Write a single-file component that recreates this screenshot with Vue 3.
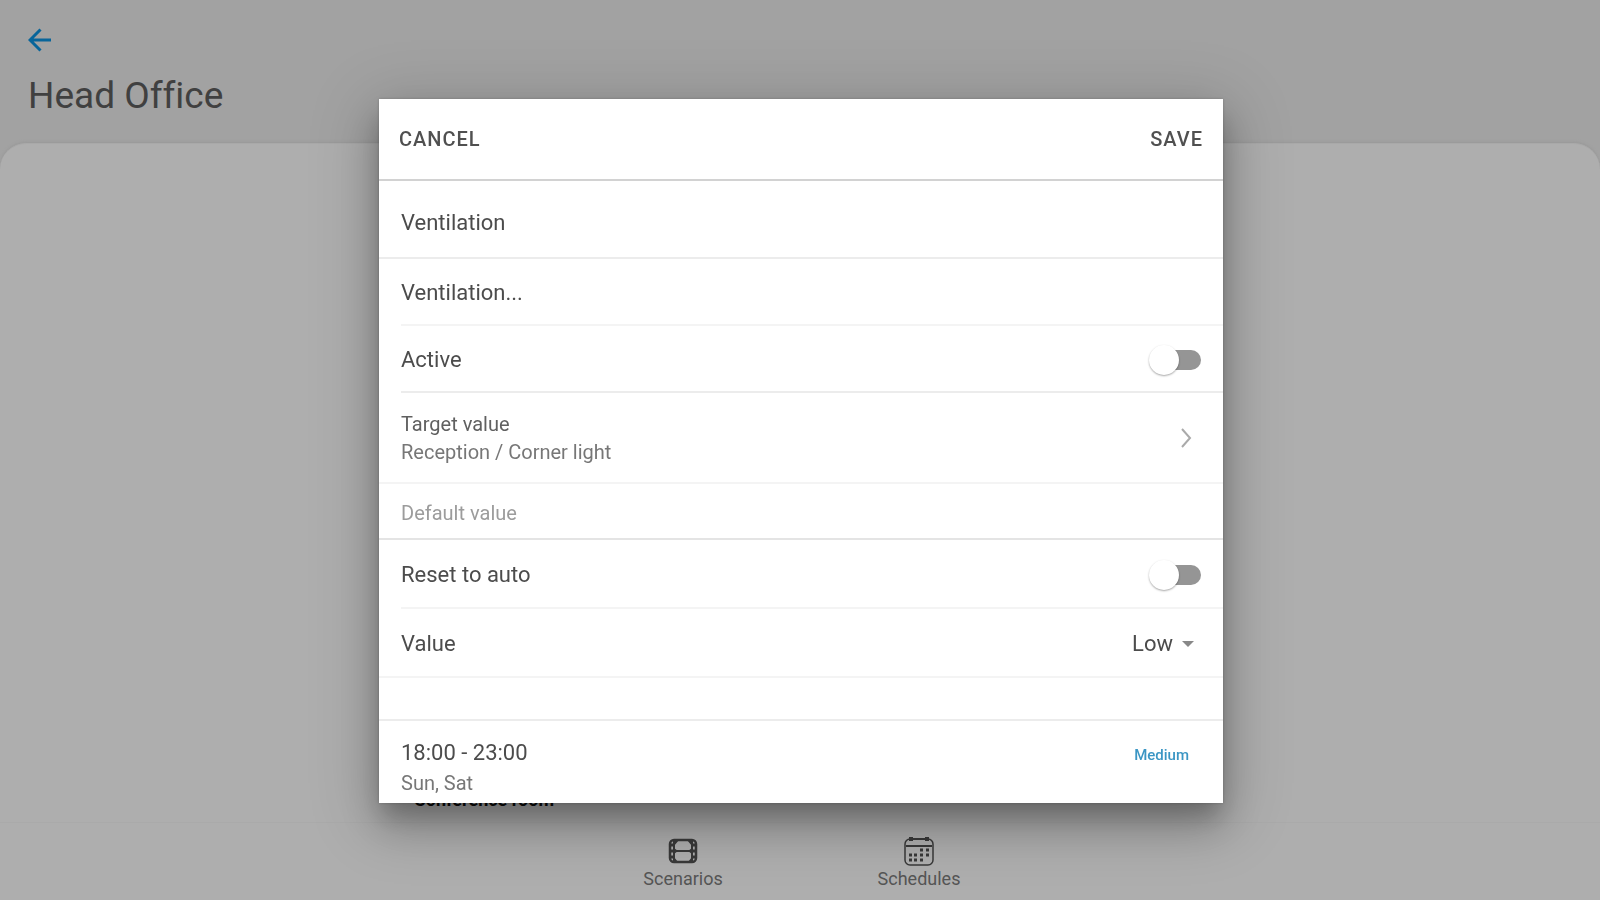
<script setup>
import { ref } from 'vue'

const active = ref(false)
const resetToAuto = ref(false)
const value = ref('Low')
</script>

<template>
  <div class="app">
    <header class="top">
      <a class="back" href="#" aria-label="Back">
        <svg viewBox="0 0 24 24" width="24" height="24" fill="none" stroke="currentColor" stroke-width="3">
          <path d="M23 12H3M12.500 1.500 2 12 12.500 22.500" />
        </svg>
      </a>
      <h1>Head Office</h1>
    </header>

    <main class="panel">
      <p class="room">Conference room</p>
    </main>

    <nav class="tabs">
      <a href="#" class="tab">
        <svg viewBox="0 0 32 32" width="32" height="32">
          <rect x="3" y="5" width="26" height="22" rx="4" fill="none" stroke="currentColor" stroke-width="2.500" />
          <path d="M7 5v22M25 5v22M7 16h18" fill="none" stroke="currentColor" stroke-width="2" />
          <path d="M3 10h4M3 16h4M3 22h4M25 10h4M25 16h4M25 22h4" stroke="currentColor" stroke-width="3" />
          <path d="M7 5h5l-5 6zM25 5h-5l5 6zM7 27h4l-4-5zM25 27h-4l4-5zM7 13l4 3-4 3zM25 13l-4 3 4 3z" fill="currentColor" />
        </svg>
        <span>Scenarios</span>
      </a>
      <a href="#" class="tab">
        <svg viewBox="0 0 32 32" width="32" height="32" fill="none" stroke="currentColor">
          <rect x="2" y="4" width="28" height="26" rx="5" stroke-width="1.500" />
          <path d="M3 11h26" stroke-width="2" />
          <path d="M8 2v4M24 2v4" stroke-width="4" />
          <path d="M8 4h16" stroke-width="2" />
          <path d="M17 15h3M23 15h3M6 20h3M11 20h3M17 20h3M23 20h3M6 25h3M11 25h3M17 25h3" stroke-width="3" />
        </svg>
        <span>Schedules</span>
      </a>
    </nav>

    <div class="overlay">
      <form class="dialog" role="dialog" aria-label="Edit schedule" @submit.prevent>
        <div class="actions">
          <button type="button">CANCEL</button>
          <button type="submit">SAVE</button>
        </div>
        <div class="row name">Ventilation</div>
        <div class="inset"><div class="row faint">Ventilation...</div></div>
        <div class="inset">
          <label class="row">
            <span>Active</span>
            <input v-model="active" class="switch" type="checkbox" role="switch" />
          </label>
        </div>
        <button type="button" class="row target">
          <span class="stack">
            <span class="target-label">Target value</span>
            <span class="sub">Reception / Corner light</span>
          </span>
          <svg class="chevron" viewBox="0 0 12 20" width="12" height="20" fill="none" stroke="currentColor" stroke-width="2">
            <path d="M1 1l8 9-8 9" />
          </svg>
        </button>
        <div class="row section">Default value</div>
        <div class="inset">
          <label class="row auto faint">
            <span>Reset to auto</span>
            <input v-model="resetToAuto" class="switch" type="checkbox" role="switch" />
          </label>
        </div>
        <div class="row auto faint">
          <label for="value">Value</label>
          <span class="picker">
            <select id="value" v-model="value">
              <option>Low</option>
              <option>Medium</option>
              <option>High</option>
            </select>
            <svg viewBox="0 0 12 6" width="12" height="6"><path d="M0 0h12L6 6z" fill="currentColor" /></svg>
          </span>
        </div>
        <div class="spacer"></div>
        <div class="row slot">
          <span class="stack">
            <span>18:00 - 23:00</span>
            <span class="sub days">Sun, Sat</span>
          </span>
          <span class="level">Medium</span>
        </div>
      </form>
    </div>
  </div>
</template>

<style>
body {
  background: #a2a2a2;
}
</style>

<style scoped>
* {
  box-sizing: border-box;
}
.app {
  display: flex;
  flex-direction: column;
  min-height: 100vh;
  background: #a2a2a2;
  font-family: Roboto, "Liberation Sans", sans-serif;
}
.top {
  padding: 28px 28px 0;
  height: 143px;
}
.back {
  display: block;
  width: 24px;
  height: 24px;
  color: #08659a;
}
h1 {
  margin: 23px 0 0;
  font-size: 37px;
  line-height: 42px;
  font-weight: 400;
  font-variant-ligatures: none;
  color: #404040;
}
.panel {
  flex: 1;
  display: flex;
  align-items: flex-end;
  padding: 0 414px 10px;
  background: #aeaeae;
  border-top: 1px solid #a9a9a9;
  border-radius: 26px 26px 0 0;
  box-shadow: 0 -1px 3px #989898;
}
.room {
  margin: 0;
  font-size: 18px;
  line-height: 24px;
  font-weight: 700;
  color: #0c0c0c;
}
.tabs {
  display: flex;
  justify-content: center;
  gap: 136px;
  height: 78px;
  padding: 12px 0 0 2px;
  background: #aeaeae;
  border-top: 1px solid #aaaaaa;
}
.tab {
  display: flex;
  flex-direction: column;
  align-items: center;
  width: 100px;
  color: #393939;
  text-decoration: none;
}
.tab span {
  font-size: 18px;
  line-height: 24px;
  color: #555555;
}
.overlay {
  position: fixed;
  inset: 0;
  display: flex;
  align-items: center;
  justify-content: center;
  padding: 2px 0 0 2px;
}
.dialog {
  width: 100%;
  max-width: 844px;
  background: #ffffff;
  color: #4c4c4c;
  font-size: 22px;
  line-height: 28px;
  box-shadow: 0 16px 22px -4px rgba(0, 0, 0, 0.2), 0 24px 40px 3px rgba(0, 0, 0, 0.17), 0 12px 60px 10px rgba(0, 0, 0, 0.16), 0 0 3px rgba(0, 0, 0, 0.2);
}
button {
  margin: 0;
  padding: 0;
  border: 0;
  background: none;
  font-family: inherit;
  color: inherit;
}
.actions {
  display: flex;
  justify-content: space-between;
  align-items: center;
  height: 82px;
  padding: 0 20px;
  border-bottom: 2px solid #d2d2d2;
}
.actions button {
  font-size: 20px;
  line-height: 24px;
  font-weight: 500;
  letter-spacing: 1px;
  color: #505050;
}
.row {
  display: flex;
  align-items: center;
  justify-content: space-between;
  height: 67px;
  padding: 2px 22px 0;
  border-bottom: 2px solid #ececec;
}
.inset {
  padding-left: 22px;
}
.inset .row {
  padding-left: 0;
}
.row.name {
  height: 78px;
  padding-top: 8px;
}
.row.faint {
  border-bottom-color: #f4f4f4;
}
.row.auto {
  height: 69px;
}
.stack {
  display: flex;
  flex-direction: column;
  text-align: left;
}
.row.target {
  width: 100%;
  height: 91px;
  padding: 0 30px 0 22px;
  border-bottom: 2px solid #f4f4f4;
  font-size: 20px;
  line-height: 28px;
}
.target-label {
  color: #606060;
}
.sub {
  font-size: 20px;
  line-height: 28px;
  color: #777777;
}
.chevron {
  color: #aaaaaa;
}
.row.section {
  height: 56px;
  padding-top: 4px;
  font-size: 20px;
  color: #9c9c9c;
  border-bottom-color: #e4e4e4;
}
.switch {
  appearance: none;
  position: relative;
  width: 52px;
  height: 32px;
  margin: 0;
}
.switch::before {
  content: "";
  position: absolute;
  top: 6px;
  right: 0;
  width: 44px;
  height: 20px;
  border-radius: 10px;
  background: #959595;
}
.switch::after {
  content: "";
  position: absolute;
  top: 1px;
  left: 0;
  width: 30px;
  height: 30px;
  border-radius: 50%;
  background: #ffffff;
  box-shadow: 0 1px 2px rgba(0, 0, 0, 0.35);
}
.switch:checked::after {
  left: 22px;
}
.picker {
  display: flex;
  align-items: center;
  gap: 9px;
  padding-right: 7px;
  color: #888888;
}
select {
  appearance: none;
  field-sizing: content;
  padding: 0;
  border: 0;
  background: none;
  font-family: inherit;
  font-size: 22px;
  line-height: 28px;
  color: #4c4c4c;
}
.spacer {
  height: 43px;
  border-bottom: 2px solid #ececec;
}
.row.slot {
  height: 82px;
  align-items: flex-start;
  border-bottom: 0;
  padding: 18px 34px 0 22px;
}
.days {
  line-height: 32px;
}
.level {
  font-size: 15px;
  line-height: 32px;
  font-weight: 500;
  color: #3b96c4;
}
</style>
